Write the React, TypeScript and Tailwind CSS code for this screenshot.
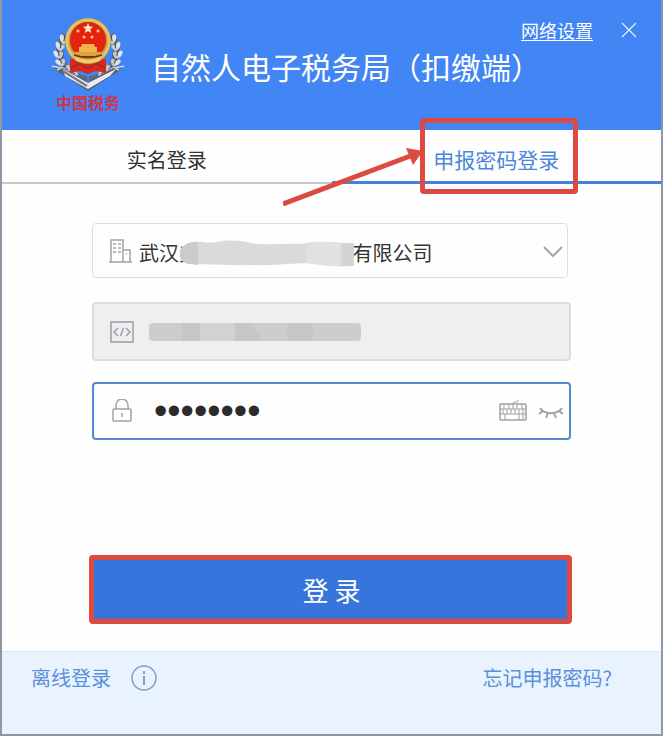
import React, { useState } from 'react'
import { clsx } from 'clsx'

const COMPANY = '武汉鑫　　　　　　　\u00a0\u00a0\u00a0有限公司'

// Leaf positions for one side of the wreath, mirrored for the other
const leaves = [
  { x: 13, y: 22, r: 20 },
  { x: 9, y: 29, r: 10 },
  { x: 7, y: 37, r: -5 },
  { x: 9, y: 45, r: -22 },
  { x: 14, y: 52, r: -38 },
  { x: 21, y: 57, r: -55 },
]

function Wreath() {
  return (
    <g>
      <path d="M14 19C6 30 7 47 20 57c5 4 10 6 16 7" fill="none" stroke="#5b6880" strokeWidth="7" />
      {leaves.map((leaf) => (
        <g key={leaf.y} transform={`translate(${leaf.x} ${leaf.y}) rotate(${leaf.r})`}>
          <ellipse cx="-2" cy="0" rx="2.200" ry="4" fill="#dde4e8" transform="rotate(-30)" />
          <ellipse cx="3" cy="1" rx="2.200" ry="4" fill="#c3cbd0" transform="rotate(34)" />
          <path d="M0-3l1 6" stroke="#4b4f58" strokeWidth="1" />
        </g>
      ))}
    </g>
  )
}

function Emblem() {
  return (
    <svg className="h-[76px] w-[74px]" viewBox="0 0 74 76" aria-hidden="true">
      <Wreath />
      <g transform="translate(74 0) scale(-1 1)">
        <Wreath />
      </g>
      <path d="M19 43h36v14l-10-2-8 3-8-3-10 2z" fill="#d92a1c" />
      <path d="M20 52l8-4 9 4 9-4 8 4" fill="none" stroke="#b0281c" strokeWidth="2" />
      <circle cx="37" cy="25" r="23" fill="#bf9a3e" />
      <circle cx="37" cy="25" r="21" fill="none" stroke="#dfc566" strokeWidth="3" />
      <circle cx="37" cy="24" r="18" fill="#e3230f" />
      <path d="M37 7l1.400 3.600 3.800.2-3 2.400 1 3.800-3.200-2.100-3.200 2.100 1-3.800-3-2.400 3.800-.2z" fill="#fff0c8" />
      <g fill="#ffc58a">
        <circle cx="27" cy="15" r="1.500" />
        <circle cx="47" cy="15" r="1.500" />
        <circle cx="33" cy="21" r="1.500" />
        <circle cx="41" cy="21" r="1.500" />
      </g>
      <path d="M31 28h12l1 3h2v5H28v-5h2z" fill="#efb548" />
      <path d="M21 36h32l-3 4H24z" fill="#d9a63c" />
      <path d="M23 39c9 3 19 3 28 0" fill="none" stroke="#7d2a1b" strokeWidth="1.500" />
      <path d="M25 43c7 3 17 3 24 0" fill="none" stroke="#ecd070" strokeWidth="3" />
      <path d="M1 49l9 2 27 15 27-15 9-2-5 6-31 20L6 55z" fill="#59616f" />
      <path d="M12 53l25 14 28-14-6 7-22 13-23-13z" fill="#e9edf0" />
      <path d="M1 50l9 2-4 2M73 50l-9 2 4 2" fill="none" stroke="#d8dde2" strokeWidth="1.500" />
      <path d="M12 55l24 15" stroke="#777d88" strokeWidth="2.500" />
    </svg>
  )
}

function BuildingIcon() {
  return (
    <svg className="h-6 w-6" viewBox="0 0 24 24" fill="none" stroke="#a3a3a3" strokeWidth="1.500" role="img" aria-label="企业名称">
      <path d="M2 23V1h12v22M14 11h7v12M0 23h23" />
      <path d="M4 5h3M9 5h3M4 9h3M9 9h3M4 13h3M9 13h3M17 15h1" />
    </svg>
  )
}

function CodeIcon() {
  return (
    <svg className="h-6 w-6" viewBox="0 0 24 24" fill="none" stroke="#9ba0a2" strokeWidth="1.500" role="img" aria-label="纳税人识别号">
      <path d="M1 2h22v20H1z" />
      <path d="M8 8l-4 4 4 4M16 8l4 4-4 4M13.500 8l-3 8" />
    </svg>
  )
}

function LockIcon() {
  return (
    <svg className="h-6 w-6" viewBox="0 0 24 24" fill="none" stroke="#a3a3a3" strokeWidth="1.500" role="img" aria-label="申报密码">
      <rect x="3" y="10" width="18" height="12" rx="1" />
      <path d="M6 10V6a6 6 0 0 1 12 0v4M12 14v4" />
    </svg>
  )
}

function KeyboardIcon() {
  return (
    <svg className="h-6 w-7" viewBox="0 0 28 24" fill="none" stroke="#a0a0a0" aria-hidden="true">
      <rect x="1" y="5" width="26" height="16" rx="1" strokeWidth="1.500" />
      <path d="M1 10h26M1 15h26M14 5c0-4 5 0 5-4" />
      <path d="M5 5v5M10 5v5M14 5v5M18 5v5M23 5v5M4 10v5M8 10v5M12 10v5M16 10v5M20 10v5M24 10v5M6 15v6M20 15v6M24 15v6" />
    </svg>
  )
}

function ClosedEyeIcon() {
  return (
    <svg className="h-6 w-6" viewBox="0 0 24 24" fill="none" stroke="#a0a0a0" strokeWidth="2" aria-hidden="true">
      <path d="M1 9c5 7 17 7 22 0M4 12l-4 3M9 14l-2 5M15 14l2 5M20 12l4 3" />
    </svg>
  )
}

export default function App() {
  const [tab, setTab] = useState('password')
  const [password, setPassword] = useState('12345678')
  const [showPassword, setShowPassword] = useState(false)

  return (
    <div className="flex min-h-screen flex-col border-x-2 border-b-2 border-[#8d97a5] bg-[#fefefe] font-['Noto_Sans_CJK_SC',sans-serif]">
      {/* Header */}
      <header className="flex h-[130px] items-start bg-[#4285f4] pr-6 pl-12 text-white">
        <div className="flex w-[76px] flex-col items-center pt-4">
          <Emblem />
          <span className="text-base leading-5 font-bold text-[#c8384f]">中国税务</span>
        </div>
        <h1 className="ml-[25px] pt-11 text-[30px] leading-[44px] whitespace-nowrap">
          自然人电子税务局（扣缴端）
        </h1>
        <div className="-ml-12 flex flex-1 items-center justify-end gap-7 pt-[18px]">
          <a href="#network" className="text-lg leading-6 whitespace-nowrap underline underline-offset-2">
            网络设置
          </a>
          <button type="button" aria-label="关闭">
            <svg className="h-4 w-4" viewBox="0 0 16 16" stroke="#e6efff" strokeWidth="1.200" aria-hidden="true">
              <path d="M1 1l14 14M15 1L1 15" />
            </svg>
          </button>
        </div>
      </header>

      {/* Tabs */}
      <nav className="grid grid-cols-2">
        <button
          type="button"
          onClick={() => setTab('real')}
          className={clsx(
            'h-[54px] border-b-2 pt-2 text-xl',
            tab === 'real' ? 'border-[#4285d8] text-[#4285d8]' : 'border-[#c8c8c8] text-[#333333]',
          )}
        >
          实名登录
        </button>
        <div className="relative">
          <button
            type="button"
            onClick={() => setTab('password')}
            className={clsx(
              'h-[54px] w-full border-b-3 pt-2 text-[21px]',
              tab === 'password' ? 'border-[#4285d8] text-[#4c86dc]' : 'border-[#c8c8c8] text-[#333333]',
            )}
          >
            申报密码登录
          </button>
          {/* Highlight box and arrow */}
          <div className="pointer-events-none absolute -top-3 left-1/2 h-[76px] w-[158px] -translate-x-[76px] rounded-sm border-5 border-[#dc4a41]">
            <svg className="absolute top-6 right-full h-[60px] w-[142px]" viewBox="0 0 142 60" aria-hidden="true">
              <path d="M0 57L130 8" stroke="#dc4a41" strokeWidth="5" />
              <path d="M123 1l17 3-10 14z" fill="#dc4a41" />
            </svg>
          </div>
        </div>
      </nav>

      {/* Login form */}
      <form className="flex-1 px-[90px] pt-[39px] pb-7" onSubmit={(e) => e.preventDefault()}>
        <div className="relative mr-[3px] flex h-[55px] items-center rounded-sm border border-[#dedede] pr-1 pl-4">
          <label htmlFor="company">
            <BuildingIcon />
          </label>
          <select
            id="company"
            className="ml-[6px] h-full min-w-0 flex-1 appearance-none bg-transparent pt-1 text-xl text-[#333333] outline-none"
          >
            <option>{COMPANY}</option>
          </select>
          <svg className="h-5 w-5" viewBox="0 0 20 20" fill="none" stroke="#a6a6a6" strokeWidth="2" aria-hidden="true">
            <path d="M1 6l9 9 9-9" />
          </svg>
          <svg className="absolute top-4 left-[87px] h-7 w-[175px]" viewBox="0 0 175 28" aria-hidden="true">
            <path d="M9 3c10-3 18 1 28-1s20-2 34 1 34 0 50 1c12-2 24-3 53 0v22c-16 1-28 0-40-3-20 0-40 3-60 2-20 1-40-1-65-1-12-2-14-17 0-21z" fill="#dadada" />
            <path d="M9 3c3-1 6-1 9-1v23L9 24C-3 22-3 7 9 3z" fill="#cbcbcb" />
            <path d="M126 3c12-2 22-1 35 0v23c-14 0-24-1-35-3z" fill="#e1e1e1" />
            <path d="M161 3h13v22l-13 1z" fill="#d4d4d4" />
          </svg>
        </div>

        <div className="relative mt-6 flex h-[59px] items-center rounded-sm border-2 border-[#dcdddf] bg-[#efeff1] pl-4">
          <label htmlFor="code">
            <CodeIcon />
          </label>
          <input id="code" readOnly className="ml-4 h-full min-w-0 flex-1 bg-transparent text-xl outline-none" />
          <svg className="absolute top-[18px] left-[55px] h-5 w-[212px]" viewBox="0 0 212 20" aria-hidden="true">
            <rect y="1" width="212" height="18" rx="4" fill="#cdcdcf" />
            <path d="M33 1h18v18H33zM86 1h17l12 18H86zM138 1h26v18h-26z" fill="#c7c7c9" />
            <path d="M51 1h35v18H51z" fill="#d3d3d5" />
          </svg>
        </div>

        <div className="mt-[21px] flex h-[58px] items-center rounded-sm border-2 border-[#5688d2] pr-[6px] pl-4">
          <label htmlFor="password">
            <LockIcon />
          </label>
          <input
            id="password"
            type={showPassword ? 'text' : 'password'}
            value={password}
            onChange={(e) => setPassword(e.target.value)}
            className="ml-5 h-full min-w-0 flex-1 bg-transparent font-['Liberation_Sans',sans-serif] text-[38px] text-[#2b2b2b] outline-none"
          />
          <button type="button" aria-label="软键盘" className="mr-3">
            <KeyboardIcon />
          </button>
          <button type="button" aria-label="显示密码" onClick={() => setShowPassword(!showPassword)}>
            <ClosedEyeIcon />
          </button>
        </div>

        <div className="relative mt-[118px]">
          <button type="submit" className="h-[63px] w-full bg-[#3775dc] text-[26px] text-white">
            登&nbsp;录
          </button>
          <div className="pointer-events-none absolute -inset-y-[3px] -right-px -left-[3px] rounded-sm border-5 border-[#dc4a41]" />
        </div>
      </form>

      {/* Footer */}
      <footer className="flex items-start justify-between border-t border-[#dbe6ee] bg-[#e8f3fe] px-[29px] pt-[10px] pb-10 text-xl leading-8">
        <div className="flex items-center gap-5">
          <a href="#offline" className="text-[#5a8fdc]">
            离线登录
          </a>
          <button type="button" aria-label="说明">
            <svg className="h-[26px] w-[26px]" viewBox="0 0 26 26" fill="none" stroke="#7f9fd0" strokeWidth="1.500" aria-hidden="true">
              <circle cx="13" cy="13" r="12" />
              <path d="M13 11v9M13 6v3" strokeWidth="2" />
            </svg>
          </button>
        </div>
        <a href="#forgot" className="mr-5 text-[#5a8fdc]">
          忘记申报密码?
        </a>
      </footer>
    </div>
  )
}
